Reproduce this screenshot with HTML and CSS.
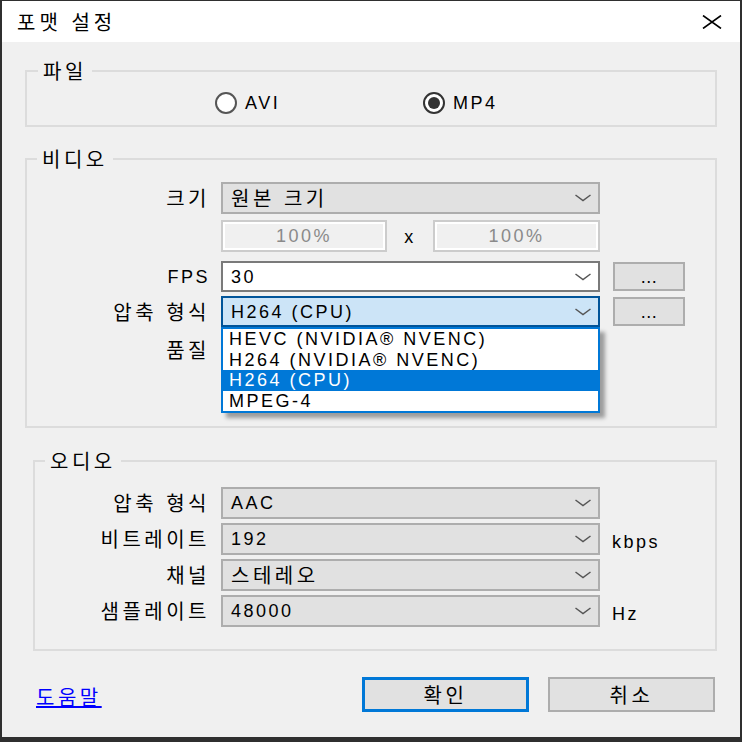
FILE: index.html
```html
<!DOCTYPE html>
<html lang="ko">
<head>
<meta charset="utf-8">
<title>포맷 설정</title>
<link rel="stylesheet" href="styles.css">
</head>
<body>
<div class="window">
  <header class="titlebar">
    <span class="ko title">포맷 설정</span>
    <svg class="close" width="20" height="14" viewBox="0 0 20 14"><path d="M1 0.5 L19 13.5 M19 0.5 L1 13.5" stroke="#000" stroke-width="1.6" fill="none"/></svg>
  </header>
  <main class="content">
    <fieldset class="group g-file">
      <legend class="ko">파일</legend>
      <div class="radios">
        <span class="radio r-first"><span class="dot"></span>AVI</span>
        <span class="radio"><span class="dot checked"></span>MP4</span>
      </div>
    </fieldset>

    <fieldset class="group g-video">
      <legend class="ko">비디오</legend>
      <div class="row r1">
        <span class="lbl ko">크기</span>
        <div class="combo gray"><span class="ko val">원본 크기</span><svg class="chev" width="16" height="8" viewBox="0 0 16 8"><polyline points="0.5,1 8,6.5 15.5,1" fill="none" stroke="#555" stroke-width="1.5"/></svg></div>
      </div>
      <div class="row r2">
        <span class="lbl"></span>
        <div class="pct"><span class="edit">100%</span><span class="times">x</span><span class="edit">100%</span></div>
      </div>
      <div class="row r3">
        <span class="lbl">FPS</span>
        <div class="combo white"><span class="val">30</span><svg class="chev" width="16" height="8" viewBox="0 0 16 8"><polyline points="0.5,1 8,6.5 15.5,1" fill="none" stroke="#555" stroke-width="1.5"/></svg></div>
        <span class="more">...</span>
      </div>
      <div class="row r4">
        <span class="lbl ko">압축 형식</span>
        <div class="combo focus"><span class="val">H264 (CPU)</span><svg class="chev" width="16" height="8" viewBox="0 0 16 8"><polyline points="0.5,1 8,6.5 15.5,1" fill="none" stroke="#555" stroke-width="1.5"/></svg>
          <ul class="dropdown">
            <li>HEVC (NVIDIA® NVENC)</li>
            <li>H264 (NVIDIA® NVENC)</li>
            <li class="sel">H264 (CPU)</li>
            <li>MPEG-4</li>
          </ul>
        </div>
        <span class="more">...</span>
      </div>
      <div class="row r5">
        <span class="lbl ko">품질</span>
      </div>
    </fieldset>

    <fieldset class="group g-audio">
      <legend class="ko">오디오</legend>
      <div class="row">
        <span class="lbl ko">압축 형식</span>
        <div class="combo gray"><span class="val">AAC</span><svg class="chev" width="16" height="8" viewBox="0 0 16 8"><polyline points="0.5,1 8,6.5 15.5,1" fill="none" stroke="#555" stroke-width="1.5"/></svg></div>
      </div>
      <div class="row">
        <span class="lbl ko">비트레이트</span>
        <div class="combo gray"><span class="val">192</span><svg class="chev" width="16" height="8" viewBox="0 0 16 8"><polyline points="0.5,1 8,6.5 15.5,1" fill="none" stroke="#555" stroke-width="1.5"/></svg></div>
        <span class="unit">kbps</span>
      </div>
      <div class="row">
        <span class="lbl ko">채널</span>
        <div class="combo gray"><span class="val ko">스테레오</span><svg class="chev" width="16" height="8" viewBox="0 0 16 8"><polyline points="0.5,1 8,6.5 15.5,1" fill="none" stroke="#555" stroke-width="1.5"/></svg></div>
      </div>
      <div class="row">
        <span class="lbl ko">샘플레이트</span>
        <div class="combo gray"><span class="val">48000</span><svg class="chev" width="16" height="8" viewBox="0 0 16 8"><polyline points="0.5,1 8,6.5 15.5,1" fill="none" stroke="#555" stroke-width="1.5"/></svg></div>
        <span class="unit">Hz</span>
      </div>
    </fieldset>

    <div class="footer">
      <a class="help ko" href="#">도움말</a>
      <span class="btn primary ko">확인</span>
      <span class="btn ko">취소</span>
    </div>
  </main>
</div>
</body>
</html>
```

FILE: styles.css
```css
* { box-sizing: border-box; }

html, body {
  margin: 0;
  padding: 0;
  background: #2f2f2f;
}

body {
  width: 742px;
  height: 742px;
  overflow: hidden;
  font-family: "Liberation Sans", "Noto Sans CJK KR", sans-serif;
  font-size: 18px;
  letter-spacing: 2.5px;
  color: #000;
}

.ko {
  font-family: "Noto Sans CJK KR", sans-serif;
  font-size: 20px;
  letter-spacing: 3.5px;
}

.window {
  margin: 1px 2px 0 2px;
  width: 738px;
  height: 736px;
  display: flex;
  flex-direction: column;
  background: #f0f0f0;
}

.titlebar {
  height: 41px;
  flex: none;
  background: #fff;
  display: flex;
  align-items: center;
  justify-content: space-between;
  padding: 0 18px 0 15px;
}

.title {
  line-height: 24px;
  letter-spacing: 4px;
}

.close {
  display: block;
}

.content {
  flex: 1;
  display: flex;
  flex-direction: column;
}

.group {
  margin: 0;
  padding: 0;
  border: 2px solid #dcdcdc;
  min-inline-size: 0;
}

.group legend {
  padding: 0 5px;
  line-height: 20px;
  height: 20px;
  margin-left: 11px;
}

.g-file {
  margin: 19px 0 0 23px;
  width: 692px;
  height: 66px;
}

.radios {
  height: 44px;
  display: flex;
  align-items: center;
  padding-left: 188px;
}

.radio {
  display: flex;
  align-items: center;
  line-height: 20px;
}

.r-first {
  width: 208px;
}

.dot {
  width: 22px;
  height: 22px;
  border-radius: 50%;
  border: 2px solid #555;
  background: #fff;
  margin-right: 8px;
  display: flex;
  align-items: center;
  justify-content: center;
}

.dot.checked {
  border-color: #333;
}

.dot.checked::after {
  content: "";
  width: 12px;
  height: 12px;
  border-radius: 50%;
  background: #333;
}

.g-video {
  margin: 22px 0 0 23px;
  width: 692px;
  padding: 13px 0 61px 0;
}

.g-video legend {
  margin-left: 10px;
}

.row {
  display: flex;
  align-items: center;
  height: 32px;
}

.lbl {
  width: 183px;
  flex: none;
  text-align: right;
  margin-right: 11px;
  line-height: 24px;
}

.g-video .r1 { margin-bottom: 6px; }
.g-video .r2 { margin-bottom: 9px; }
.g-video .r3 { height: 31px; margin-bottom: 4px; }
.g-video .r4 { height: 31px; margin-bottom: 8px; }
.g-video .r5 { height: 30px; }

.combo {
  position: relative;
  width: 379px;
  height: 100%;
  flex: none;
  border: 2px solid #adadad;
  background: #e1e1e1;
  display: flex;
  align-items: center;
  justify-content: space-between;
  padding: 0 7px 0 8px;
}

.combo .val {
  line-height: 24px;
}

.combo.white {
  background: #fff;
  border-color: #7a7a7a;
}

.combo.focus {
  background: #cce4f7;
  border-color: #005499;
}

.chev {
  display: block;
  flex: none;
}

.pct {
  width: 379px;
  height: 100%;
  display: flex;
  align-items: center;
  justify-content: space-between;
}

.edit {
  width: 166px;
  height: 100%;
  border: 2px solid #cccccc;
  box-shadow: inset 0 0 0 2px #fff;
  background: #f0f0f0;
  color: #8a8a8a;
  display: flex;
  align-items: center;
  justify-content: center;
}

.edit:last-child {
  width: 167px;
}

.times {
  line-height: 20px;
  margin-top: 2px;
}

.more {
  width: 72px;
  height: 29px;
  flex: none;
  margin-left: 13px;
  border: 2px solid #adadad;
  background: #e1e1e1;
  display: flex;
  align-items: center;
  justify-content: center;
  line-height: 20px;
  letter-spacing: 0.5px;
}

.dropdown {
  position: absolute;
  left: -2px;
  top: calc(100% + 2px);
  width: 379px;
  height: 86px;
  margin: 0;
  padding: 0;
  list-style: none;
  background: #fff;
  border: 2px solid #0078d7;
  box-shadow: 5px 5px 4px rgba(0, 0, 0, 0.35);
  z-index: 5;
}

.dropdown li {
  height: 20.5px;
  line-height: 20.5px;
  padding-left: 6px;
  white-space: nowrap;
}

.dropdown li.sel {
  background: #0078d7;
  color: #fff;
}

.g-audio {
  margin: 23px 0 0 31px;
  width: 684px;
  padding: 16px 0 22px 0;
}

.g-audio legend {
  margin-left: 10px;
}

.g-audio .lbl {
  width: 175px;
}

.g-audio .row + .row {
  margin-top: 4px;
}

.unit {
  margin-left: 12px;
  padding-top: 5px;
  line-height: 20px;
}

.footer {
  margin-top: 26px;
  height: 35px;
  display: flex;
  align-items: center;
  padding: 0 25px 0 34px;
}

.help {
  color: #0000ff;
  text-decoration: underline;
  line-height: 24px;
  margin-right: auto;
  margin-top: 4px;
}

.btn {
  width: 167px;
  height: 35px;
  border: 2px solid #adadad;
  background: #e1e1e1;
  display: flex;
  align-items: center;
  justify-content: center;
  line-height: 24px;
}

.btn.primary {
  border: 3px solid #0078d7;
  margin-right: 19px;
}
```
